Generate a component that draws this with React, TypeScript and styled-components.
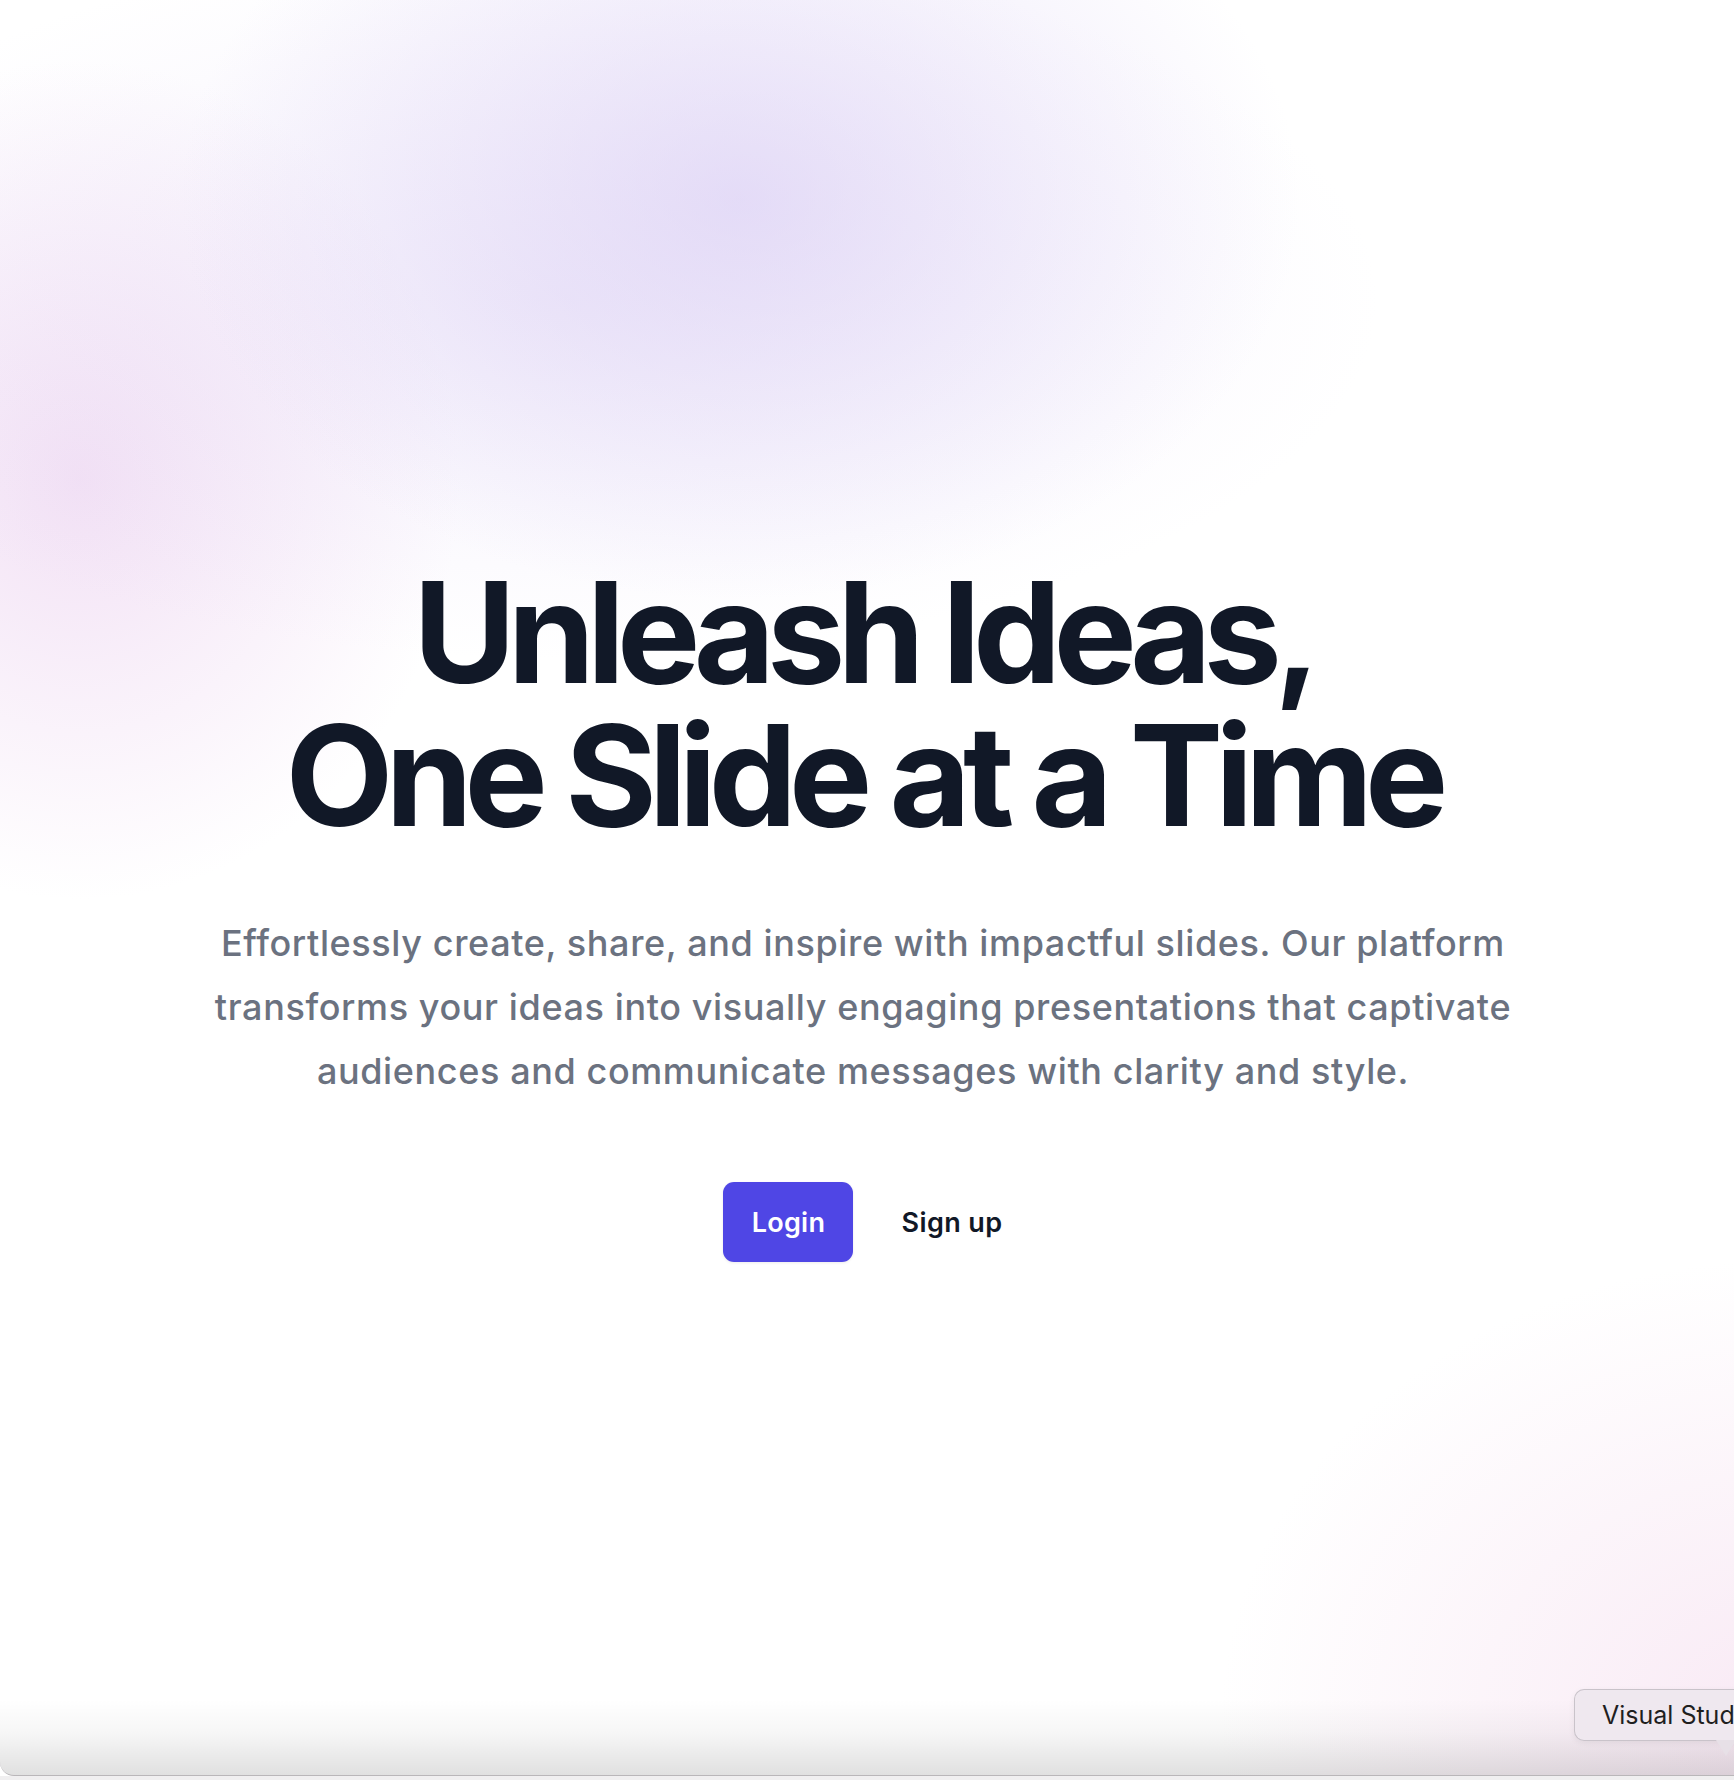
import React from 'react'
import styled, { createGlobalStyle } from 'styled-components'

const GlobalStyle = createGlobalStyle`
html, body {
  margin: 0;
  padding: 0;
}
body {
  font-family: Inter, "Noto Sans", "Liberation Sans", sans-serif;
  -webkit-font-smoothing: antialiased;
}
`

const Page = styled.div`
position: relative;
min-height: 1780px;
display: flex;
flex-direction: column;
overflow: hidden;
background:
  radial-gradient(ellipse 560px 400px at 740px 200px, rgba(210, 196, 242, 0.52), rgba(210, 196, 242, 0) 100%),
  radial-gradient(ellipse 820px 360px at 560px 300px, rgba(222, 210, 244, 0.35), rgba(222, 210, 244, 0) 100%),
  radial-gradient(ellipse 380px 420px at 80px 480px, rgba(234, 205, 238, 0.6), rgba(234, 205, 238, 0) 100%),
  radial-gradient(ellipse 560px 460px at 1780px 1720px, rgba(242, 212, 234, 0.5), rgba(242, 212, 234, 0) 100%),
  #ffffff;
`

const Hero = styled.main`
flex: 1;
display: flex;
flex-direction: column;
align-items: center;
padding: 561px 8px 0 0;
text-align: center;
`

const Title = styled.h1`
margin: 0;
font-size: 140px;
line-height: 143px;
font-weight: 700;
letter-spacing: -0.057em;
color: #111827;
`

const Lead = styled.p`
margin: 64px 0 0;
max-width: 1400px;
font-size: 36px;
line-height: 64px;
font-weight: 500;
letter-spacing: 0.017em;
color: #6b7280;
`

const Actions = styled.div`
margin-top: 79px;
display: flex;
align-items: center;
gap: 48px;
`

const PrimaryButton = styled.a`
display: flex;
align-items: center;
justify-content: center;
width: 130px;
height: 80px;
box-sizing: border-box;
border-radius: 11px;
background-color: #4f46e5;
color: #ffffff;
font-size: 27px;
font-weight: 600;
letter-spacing: 0.01em;
text-decoration: none;
box-shadow: 0 1px 3px rgba(0, 0, 0, 0.08);
`

const TextButton = styled.a`
font-size: 27px;
font-weight: 600;
letter-spacing: 0.015em;
color: #111827;
text-decoration: none;
`

const Shade = styled.div`
height: 76px;
background: linear-gradient(to bottom, rgba(0, 0, 0, 0) 0%, rgba(0, 0, 0, 0.035) 45%, rgba(0, 0, 0, 0.12) 100%);
border-bottom: 1px solid #b9b6b9;
border-bottom-left-radius: 14px;
`

const Bar = styled.div`
height: 4px;
background: #f0eff0;
`

const Tooltip = styled.div`
position: absolute;
left: 1574px;
top: 1689px;
height: 52px;
box-sizing: border-box;
padding: 0 26px 0 27px;
display: flex;
align-items: center;
border: 1px solid #c9c3ca;
border-right: none;
border-radius: 10px 0 0 10px;
background: #efe8ef;
font-family: Inter, "Noto Sans", sans-serif;
font-size: 25px;
color: #1f1f1f;
white-space: nowrap;
box-shadow: 0 2px 6px rgba(0, 0, 0, 0.06);
&::after {
  content: '';
  position: absolute;
  left: 141px;
  bottom: -16px;
  width: 0;
  height: 0;
  border-left: 10px solid transparent;
  border-right: 10px solid transparent;
  border-top: 16px solid #e7e0e7;
}
`

export default function App() {
    return (
        <Page>
            <GlobalStyle />
            <Hero>
                <Title>
                    Unleash Ideas,<br />One Slide at a Time
                </Title>
                <Lead>
                    Effortlessly create, share, and inspire with impactful slides. Our platform transforms your ideas into visually engaging presentations that captivate audiences and communicate messages with clarity and style.
                </Lead>
                <Actions>
                    <PrimaryButton href="#">Login</PrimaryButton>
                    <TextButton href="#">Sign up</TextButton>
                </Actions>
            </Hero>
            <Shade />
            <Bar />
            <Tooltip>Visual Studio Code</Tooltip>
        </Page>
    )
}
